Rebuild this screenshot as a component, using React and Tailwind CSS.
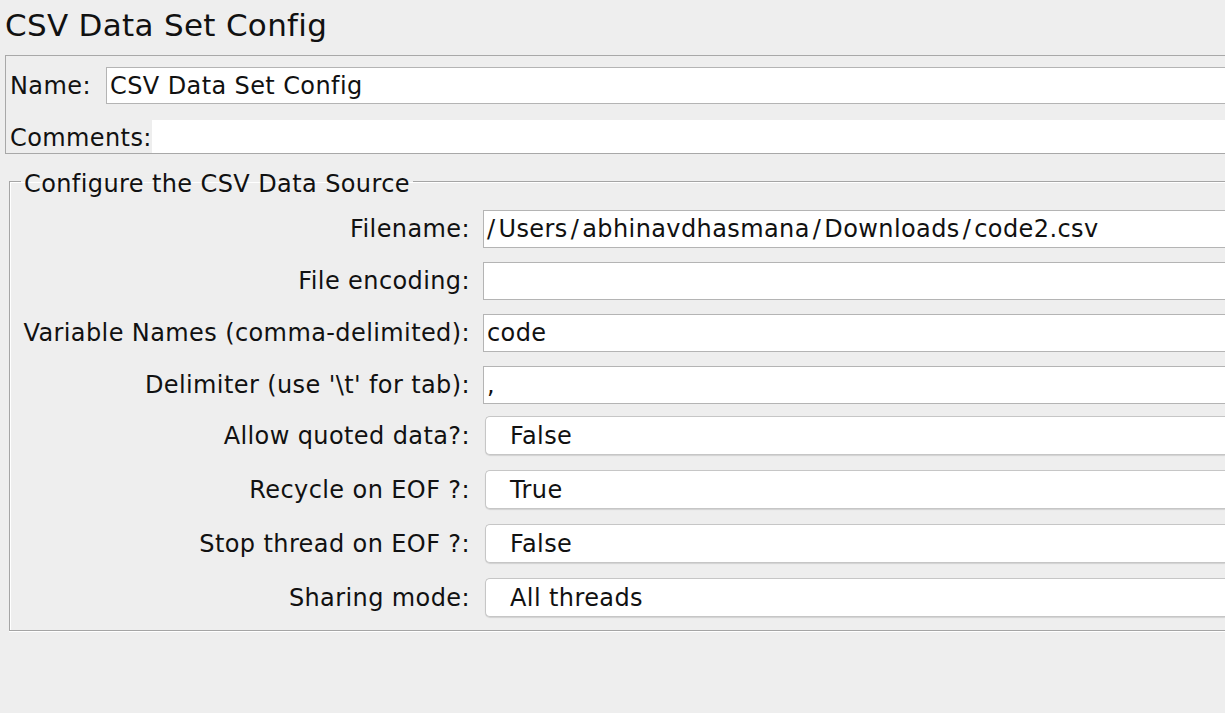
import React from "react";

const textRows = [
  { label: "Filename:", value: "/Users/abhinavdhasmana/Downloads/code2.csv" },
  { label: "File encoding:", value: "" },
  { label: "Variable Names (comma-delimited):", value: "code" },
  { label: "Delimiter (use '\\t' for tab):", value: "," },
];

const comboRows = [
  { label: "Allow quoted data?:", value: "False" },
  { label: "Recycle on EOF ?:", value: "True" },
  { label: "Stop thread on EOF ?:", value: "False" },
  { label: "Sharing mode:", value: "All threads" },
];

// the mac font puts a bit of air around slashes
function PathText({ value }) {
  const parts = value.split("/");
  return (
    <>
      {parts.map((p, i) => (
        <React.Fragment key={i}>
          {i > 0 && <span className={i === 1 ? "mr-[3px]" : "mx-[3px]"}>/</span>}
          {p}
        </React.Fragment>
      ))}
    </>
  );
}

function TextRow({ label, value }) {
  return (
    <div className="flex items-center h-[38px]">
      <div className="w-[461px] shrink-0 text-right pr-[1px] whitespace-nowrap">{label}</div>
      <div className="ml-[12px] flex-1 h-[38px] bg-white border border-[#b4b4b4] border-r-0 flex items-center pl-[3px] whitespace-nowrap">
        <PathText value={value} />
      </div>
    </div>
  );
}

function ComboRow({ label, value }) {
  return (
    <div className="flex items-center h-[39px]">
      <div className="w-[461px] shrink-0 text-right pr-[1px] whitespace-nowrap">{label}</div>
      <div className="ml-[14px] flex-1 h-[39px] bg-white border border-[#c6c6c6] border-r-0 rounded-l-[5px] shadow-[0_1px_1px_rgba(0,0,0,0.12)] flex items-center pl-[24px]">
        {value}
      </div>
    </div>
  );
}

export default function App() {
  return (
    <div
      className="w-[1225px] h-[713px] overflow-hidden bg-[#eeeeee] text-[#111] text-[24px] tracking-[0.4px]"
      style={{ fontFamily: '"DejaVu Sans", "Liberation Sans", sans-serif' }}
    >
      <div className="h-[55px] pl-[5px] pt-[5px] text-[31px] leading-[40px] tracking-[0.3px]">CSV Data Set Config</div>

      <div className="ml-[5px] h-[99px] border border-[#a8a8a8] border-r-0 flex flex-col">
        <div className="flex items-center mt-[11px] h-[37px]">
          <span className="pl-[4px] w-[100px] shrink-0">Name:</span>
          <div className="flex-1 h-[37px] bg-white border border-[#b4b4b4] border-r-0 flex items-center pl-[3px]">
            CSV Data Set Config
          </div>
        </div>
        <div className="flex items-end mt-auto h-[33px]">
          <span className="pl-[4px] leading-[30px]">Comments:</span>
          <div className="flex-1 h-[33px] bg-white"></div>
        </div>
      </div>

      <fieldset className="ml-[9px] mt-[11px] h-[466px] border border-[#a5a5a5] border-r-0 shadow-[0_1px_0_#fff,inset_1px_1px_0_#fff]">
        <legend className="ml-[11px] px-[3px] pt-[6px] leading-[26px]">Configure the CSV Data Source</legend>
        <div className="flex flex-col gap-[14px] mt-[13px]">
          {textRows.map((r) => (
            <TextRow key={r.label} {...r} />
          ))}
        </div>
        <div className="flex flex-col gap-[15px] mt-[12px]">
          {comboRows.map((r) => (
            <ComboRow key={r.label} {...r} />
          ))}
        </div>
      </fieldset>
    </div>
  );
}
